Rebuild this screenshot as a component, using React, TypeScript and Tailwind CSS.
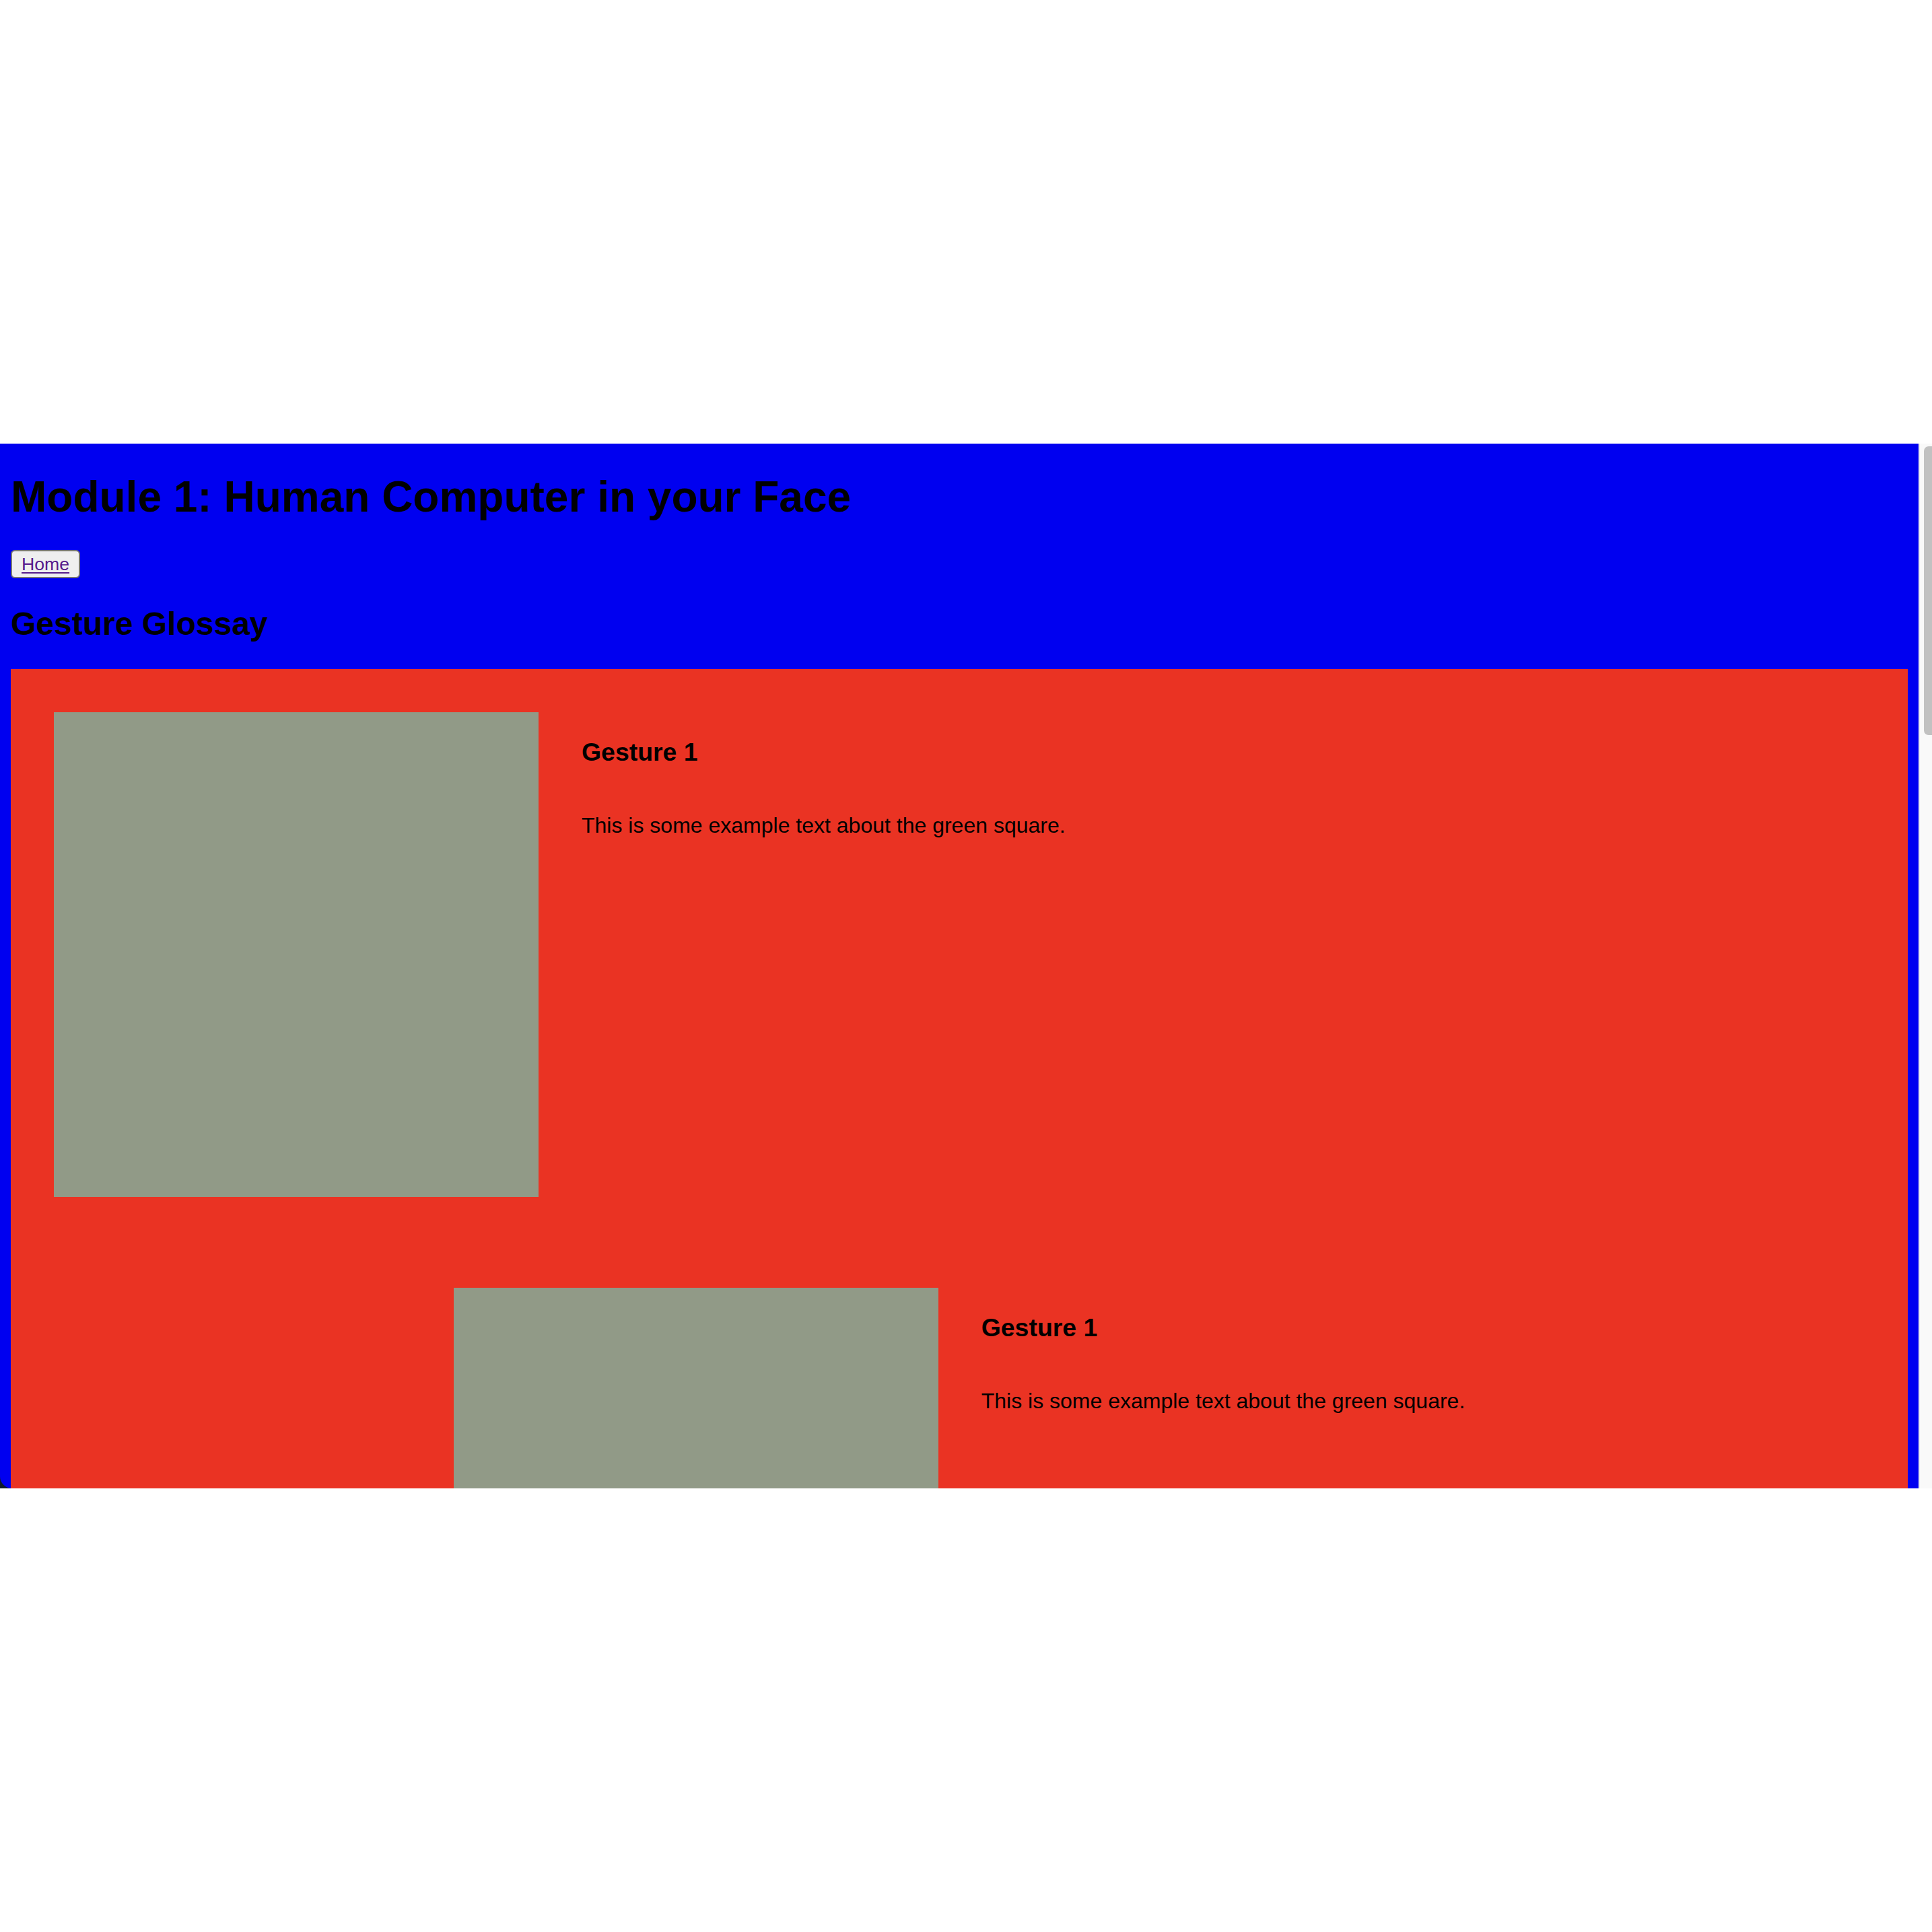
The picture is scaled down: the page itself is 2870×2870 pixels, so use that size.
import React from "react";

const GestureRow = ({centered}: {centered?: boolean}) => {
    return (
        <div className={centered ? "flex flex-row items-start justify-center" : "flex flex-row items-start justify-start"}>
            <div className="w-[720px] h-[720px] shrink-0 bg-[#919a87]"/>
            <div className="flex flex-col ml-[64px]">
                <h3 className="mt-[38px] text-[37.44px] leading-[43px] font-bold">Gesture 1</h3>
                <p className="mt-[69px] text-[32px] leading-[37px]">This is some example text about the green square.</p>
            </div>
        </div>
    );
};

export default function App() {
    return (
        <div className="w-[2870px] h-[2870px] bg-white flex flex-col font-['Liberation_Sans',Arial,sans-serif] text-black">
            <div className="h-[659px] shrink-0"/>
            <div className="flex flex-row h-[1552px] shrink-0 bg-[#0e1a2a]">
                <div className="w-[2850px] h-full overflow-hidden bg-[#0000f0] rounded-bl-[18px] px-[16px]">
                    <h1 className="mt-[42px] mb-[42px] text-[64px] leading-[74px] font-bold">
                        Module 1: Human Computer in your Face
                    </h1>
                    <button
                        type="button"
                        className="flex items-center h-[42px] px-[14px] border-2 border-[#767676] rounded-[6px] bg-[#efefef] text-[26.67px] leading-[31px]"
                    >
                        <a className="underline text-[#551a8b] decoration-[2px] underline-offset-[3px]">Home</a>
                    </button>
                    <h2 className="mt-[40px] mb-[40px] text-[48px] leading-[55px] font-bold">Gesture Glossay</h2>
                    <div className="bg-[#ea3323] p-[64px] flex flex-col gap-[135px]">
                        <GestureRow/>
                        <GestureRow centered/>
                    </div>
                </div>
                <div className="w-[20px] h-full bg-[#f9f9f9] border-l-2 border-[#ececec] pt-[4px] pl-[6px]">
                    <div className="w-[12px] h-[429px] rounded-l-[7px] bg-[#c1c1c1]"/>
                </div>
            </div>
        </div>
    );
}
